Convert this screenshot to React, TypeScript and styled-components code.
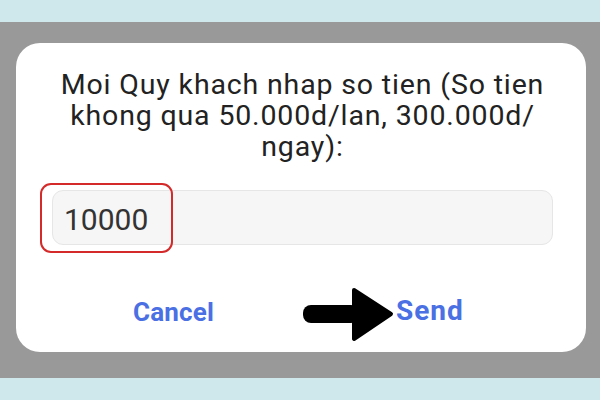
import React from "react";
import styled, { createGlobalStyle } from "styled-components";

const Global = createGlobalStyle`
  html, body { margin: 0; padding: 0; }
  body { font-family: Roboto, "Liberation Sans", Arial, sans-serif; }
`;

const Page = styled.div`
  width: 600px;
  height: 400px;
  display: flex;
  flex-direction: column;
  overflow: hidden;
`;

const Band = styled.div<{ $h: number }>`
  height: ${(p) => p.$h}px;
  flex: none;
  background: #cfe8ec;
`;

const Stage = styled.div`
  flex: 1;
  background: #999999;
  padding: 21px 14px 26px 16px;
  display: flex;
`;

const Card = styled.div`
  position: relative;
  flex: 1;
  background: #ffffff;
  border-radius: 24px;
  padding: 26px 33px 0 36px;
  display: flex;
  flex-direction: column;
`;

const Title = styled.div`
  font-family: Roboto, "Liberation Sans", Arial, sans-serif;
  font-size: 28.5px;
  letter-spacing: 0.85px;
  line-height: 31px;
  color: #222222;
  text-align: center;
  margin: 0 -30px;
`;

const FieldWrap = styled.div`
  position: relative;
  margin-top: 28px;
`;

const Field = styled.div`
  box-sizing: border-box;
  height: 55px;
  border: 1px solid #e6e6e6;
  background: #f6f6f6;
  border-radius: 11px;
  display: flex;
  align-items: center;
  padding: 4px 0 0 11px;
  font-size: 30px;
  color: #333333;
`;

const Highlight = styled.div`
  position: absolute;
  left: -12px;
  top: -7px;
  width: 129px;
  height: 66px;
  border: 2px solid #d42a2a;
  border-radius: 11px;
  pointer-events: none;
`;

const Actions = styled.div`
  display: grid;
  grid-template-columns: 242px 1fr;
  align-items: end;
  margin-top: 52px;
  margin-left: -36px;
  margin-right: -33px;
`;

const ActionButton = styled.button<{ $offset: number; $size: number; $track: number }>`
  border: none;
  background: none;
  padding: 0;
  font-family: Roboto, "Liberation Sans", Arial, sans-serif;
  font-weight: 700;
  font-size: ${(p) => p.$size}px;
  letter-spacing: ${(p) => p.$track}px;
  line-height: 1;
  color: #4a70e4;
  justify-self: start;
  margin-left: ${(p) => p.$offset}px;
  cursor: pointer;
`;

const Arrow = styled.svg`
  position: absolute;
  left: 286px;
  top: 244px;
`;

export default function App() {
  return (
    <>
      <Global />
      <Page>
        <Band $h={22} />
        <Stage>
          <Card>
            <Title>
              Moi Quy khach nhap so tien (So tien
              <br />
              khong qua 50.000d/lan, 300.000d/
              <br />
              ngay):
            </Title>
            <FieldWrap>
              <Field>10000</Field>
              <Highlight />
            </FieldWrap>
            <Actions>
              <ActionButton $offset={117} $size={26} $track={0.2}>
                Cancel
              </ActionButton>
              <ActionButton $offset={138} $size={28} $track={1}>
                Send
              </ActionButton>
            </Actions>
            <Arrow width="92" height="56" viewBox="0 0 92 56">
              <rect x="1" y="18" width="56" height="18" rx="8" fill="#000" />
              <path
                d="M52 3 L89 27 L52 52 Z"
                fill="#000"
                stroke="#000"
                strokeWidth="4"
                strokeLinejoin="round"
              />
            </Arrow>
          </Card>
        </Stage>
        <Band $h={22} />
      </Page>
    </>
  );
}
